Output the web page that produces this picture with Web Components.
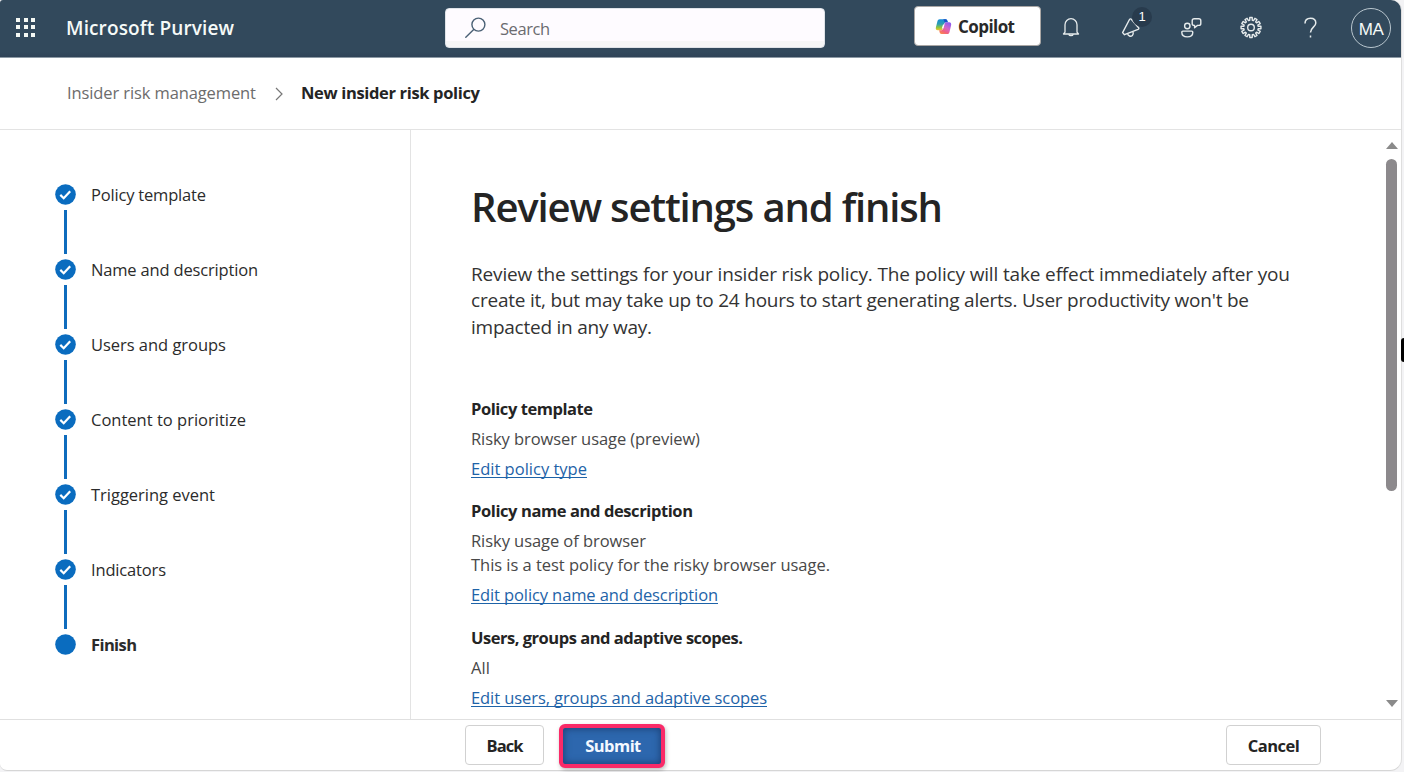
<!DOCTYPE html>
<html lang="en">
<head>
<meta charset="utf-8">
<title>Microsoft Purview</title>
<style>
body{margin:0;width:1404px;height:772px;overflow:hidden;background:#f3f3f5;font-family:"Open Sans","Noto Sans",sans-serif;color:#242424}
</style>
</head>
<body>
<pv-shell></pv-shell>
<script>
const define=(name,html,setup)=>customElements.define(name,class extends HTMLElement{
  connectedCallback(){
    if(this.shadowRoot)return;
    const t=document.createElement('template');
    t.innerHTML=html;
    this.attachShadow({mode:'open'}).append(t.content.cloneNode(true));
    if(setup)setup(this,this.shadowRoot);
  }
});

/* One line of text, tracked so that it fills the measure given in "w". */
define('pv-text',`<style>:host{display:block;white-space:nowrap}span{display:inline-block}</style><span><slot></slot></span>`,(el,root)=>{
  const w=parseFloat(el.getAttribute('w')),n=el.textContent.length;
  const s=root.querySelector('span');
  if(w&&n>1){s.style.letterSpacing=((w-s.getBoundingClientRect().width)/(n-1))+'px'}
});

define('pv-search',`<style>
:host{display:flex;align-items:center;box-sizing:border-box;width:380px;height:40px;border-radius:4px;background:linear-gradient(#fefbff 0 32px,#f6f6f7 32px);border:1px solid #dfe3e8;padding-left:19px;color:#6b6b70;font-size:16.500px}
svg{width:22px;height:22px;margin-right:13px}
pv-text{padding-top:1px}
</style><svg viewBox="0 0 22 22" fill="none" stroke="#4a6075" stroke-width="1.4" stroke-linecap="round"><circle cx="13.4" cy="7.6" r="6.5"/><path d="M8.7 12.4.8 20.2"/></svg><pv-text w="50">Search</pv-text>`);

define('pv-copilot',`<style>
:host{display:flex;align-items:center;box-sizing:border-box;width:127px;height:40px;border-radius:4px;background:#fff;border:1px solid #a9a6a4;padding-left:20px;color:#292929;font-size:17px;font-weight:700}
svg{width:17px;height:17px;margin-right:6px}
</style><svg viewBox="0 0 18 18"><defs>
<linearGradient id="a" x1="0" y1="0" x2="0" y2="1"><stop offset="0" stop-color="#168bd8"/><stop offset=".45" stop-color="#2e9fb0"/><stop offset=".75" stop-color="#8fc63f"/><stop offset="1" stop-color="#f5c32c"/></linearGradient>
<linearGradient id="b" x1=".8" y1="0" x2=".2" y2="1"><stop offset="0" stop-color="#8a5cf0"/><stop offset=".45" stop-color="#d565c8"/><stop offset=".75" stop-color="#f2617c"/><stop offset="1" stop-color="#fa8a4b"/></linearGradient></defs>
<path d="M5 1.200h6.200c1.200 0 1.600.7 2 1.800l.5 1.600h-2c-1.200 0-1.800.8-2.100 1.900L8.300 11c-.4 1.400-1 2-2.200 2H3C1.100 13 .5 11.500 1 9.700l1.500-6C2.900 2 3.700 1.200 5 1.200z" fill="url(#a)"/>
<path d="M11 1.200c1.200 0 1.600.7 2 1.800l.5 1.600h-3.400l-.8-2.400c-.2-.6-.5-1-1-1z" fill="#1b50c8"/>
<path d="M13 17H6.900c-1.200 0-1.700-.7-2-1.800L4.400 13h2c1.200 0 1.900-.8 2.200-1.900l1.300-4.500c.4-1.400 1-2 2.200-2H15c1.900 0 2.500 1.500 2 3.300l-1.500 6.300C15.100 16 14.300 17 13 17z" fill="url(#b)"/>
<path d="m8.500 6.800h1.600l-1.300 4.400H7.200z" fill="#fff"/></svg><pv-text w="57">Copilot</pv-text>`);

define('pv-action',`<style>
:host{display:flex;align-items:center;justify-content:center;position:relative;width:60px;height:56px;color:#e6ebec}
::slotted(svg){width:22px;height:22px;overflow:visible}
b{position:absolute;left:31px;top:7px;width:20px;height:20px;border-radius:50%;background:#283b4d;font:13px/20px "Liberation Sans",sans-serif;text-align:center;color:#fff}
b[hidden]{display:none}
</style><slot></slot><b hidden></b>`,(el,root)=>{
  const n=el.getAttribute('badge');
  if(n){const b=root.querySelector('b');b.hidden=false;b.textContent=n}
});

define('pv-header',`<style>
:host{display:flex;flex:none;align-items:center;box-sizing:border-box;height:58px;padding:0 10px 3px 16px;background:linear-gradient(#32495c 0 52px,#2f4357 57px,#8c9aa5 57px);border-radius:3px 10px 0 0;color:#f6faf8}
.dots{display:grid;grid-template-columns:repeat(3,4px);gap:3.500px;width:50px;margin-top:-1px}
.dots i{width:4px;height:4px;background:#f4f8f4}
.title{font-size:19px;font-weight:600;width:379px}
.gap{flex:1}
.me{box-sizing:border-box;width:40px;height:40px;border:1.500px solid #bac7cf;border-radius:50%;display:flex;align-items:center;justify-content:center;font:17px "Liberation Sans",sans-serif;margin-left:10px}
.me pv-text{padding-top:4px}
pv-copilot{margin-top:-3px}
</style>
<div class="dots"><i></i><i></i><i></i><i></i><i></i><i></i><i></i><i></i><i></i></div>
<pv-text class="title" w="168">Microsoft Purview</pv-text>
<pv-search></pv-search><span class="gap"></span><pv-copilot></pv-copilot>
<pv-action><svg viewBox="0 0 22 22" fill="none" stroke="currentColor" stroke-width="1.300" stroke-linejoin="round"><path d="M5 15.200V7.700a6 6 0 0 1 12 0v7.500l1.500 1.800h-15z"/><path d="M8.700 17.200a2.400 2 0 0 0 4.600 0"/></svg></pv-action>
<pv-action badge="1"><svg viewBox="0 0 22 22" fill="none" stroke="currentColor" stroke-width="1.400" stroke-linejoin="round"><path d="M9.500 2.500C10 1.700 11 1.600 11.500 2.500L18.600 10.700c.5.7.2 1.300-.5 1.600L4.500 17.700 2.600 15.600z"/><path d="M7.700 16.800c.2 2.300 3 3.100 4.700 1.600.9-.8 1.100-1.900.6-3.500"/></svg></pv-action>
<pv-action><svg viewBox="0 0 22 22" fill="none" stroke="currentColor" stroke-width="1.400" stroke-linejoin="round"><circle cx="7.300" cy="9" r="2.700"/><path d="M2.900 14.100h8.800a1.100 1.100 0 0 1 1.100 1.100c0 3-2.400 4.700-5.500 4.700s-5.500-1.700-5.500-4.700a1.100 1.100 0 0 1 1.100-1.100z"/><path d="M14.200 1.800h4.600a2 2 0 0 1 2 2v2.600a2 2 0 0 1-2 2h-1.300l-2.900 2.300V8.400h-.4a2 2 0 0 1-2-2V3.800a2 2 0 0 1 2-2z"/></svg></pv-action>
<pv-action><svg id="gear" viewBox="0 0 22 22" fill="none" stroke="currentColor" stroke-width="1.400" stroke-linejoin="round"><circle cx="11" cy="10.500" r="3.300"/><path/></svg></pv-action>
<pv-action><svg viewBox="0 0 22 22" fill="none" stroke="currentColor" stroke-width="1.500"><path d="M5 6.500C5 3 7.200 1.200 10.500 1.200s5.300 2 5.300 4.800c0 4-5.300 4.500-5.300 9.500"/><path d="M10.500 18.500v2"/></svg></pv-action>
<div class="me"><pv-text w="25">MA</pv-text></div>`,(el,root)=>{
  /* Twelve-toothed gear outline. */
  const pts=[];
  for(let i=0;i<12;i++)for(const [o,r] of [[-10,7.300],[-7,10],[7,10],[10,7.300]]){
    const a=(i*30+o)*Math.PI/180;
    pts.push((11+r*Math.sin(a)).toFixed(2)+' '+(10.500-r*Math.cos(a)).toFixed(2));
  }
  root.querySelector('#gear path').setAttribute('d','M'+pts.join('L')+'z');
});

define('pv-breadcrumb',`<style>
:host{display:flex;flex:none;align-items:center;box-sizing:border-box;height:72px;padding:0 0 2px 67px;border-bottom:1px solid #e3e3e3;font-size:16.500px}
.parent{color:#6c6c6c;width:208px}
svg{width:8px;height:14px;margin:2px 18px 0 0}
.now{font-weight:700;color:#242424}
</style><pv-text class="parent" w="189">Insider risk management</pv-text><svg viewBox="0 0 8 14" fill="none" stroke="#777" stroke-width="1.200"><path d="m1 1 6 6-6 6"/></svg><pv-text class="now" w="179">New insider risk policy</pv-text>`);

define('pv-step',`<style>
:host{display:grid;grid-template-columns:21px 1fr;column-gap:15px;height:75px;font-size:16.500px;color:#2b2b2b}
.rail{display:flex;flex-direction:column;align-items:center}
svg{width:21px;height:21px}
.line{width:3px;height:44px;margin-top:5px;background:#0f6cbd}
.label{height:21px;line-height:21px;margin-top:-.5px}
:host([current]) .label{font-weight:700}
:host([current]) .line,:host([current]) .tick{display:none}
</style><div class="rail"><svg viewBox="0 0 21 21"><circle cx="10.500" cy="10.500" r="10.300" fill="#0a6cbf"/><path class="tick" d="m5.300 10.900 3.400 3.300 6.500-7" fill="none" stroke="#fff" stroke-width="2.200"/></svg><div class="line"></div></div><div class="label"><slot></slot></div>`);

define('pv-steps',`<style>:host{display:block;box-sizing:border-box;width:411px;padding:54px 0 0 55px;border-right:1px solid #e3e3e3}</style>
<pv-step><pv-text w="115">Policy template</pv-text></pv-step>
<pv-step><pv-text w="167">Name and description</pv-text></pv-step>
<pv-step><pv-text w="135">Users and groups</pv-text></pv-step>
<pv-step><pv-text w="155">Content to prioritize</pv-text></pv-step>
<pv-step><pv-text w="124">Triggering event</pv-text></pv-step>
<pv-step><pv-text w="75">Indicators</pv-text></pv-step>
<pv-step current><pv-text w="46">Finish</pv-text></pv-step>`);

define('pv-section',`<style>
:host{display:grid;row-gap:6px;margin-bottom:18.400px;font-size:16.500px;line-height:24px;color:#484848}
.h{font-weight:700;color:#242424}
</style><div class="h"><slot name="heading"></slot></div><div><slot></slot></div><div><slot name="link"></slot></div>`);

define('pv-review',`<style>
:host{display:block;box-sizing:border-box;flex:1;padding:51px 0 0 60px;overflow:hidden}
h1{margin:0;font-size:40px;font-weight:600;line-height:52px;height:52px}
.intro{margin:28px 0 57px;font-size:19px;line-height:26.250px;color:#333}
</style>
<h1><pv-text w="472">Review settings and finish</pv-text></h1>
<div class="intro">
<pv-text w="819">Review the settings for your insider risk policy. The policy will take effect immediately after you</pv-text>
<pv-text w="778">create it, but may take up to 24 hours to start generating alerts. User productivity won't be</pv-text>
<pv-text w="181">impacted in any way.</pv-text>
</div>
<pv-section><pv-text slot="heading" w="122">Policy template</pv-text><pv-text w="229">Risky browser usage (preview)</pv-text><pv-link slot="link" w="116">Edit policy type</pv-link></pv-section>
<pv-section><pv-text slot="heading" w="222">Policy name and description</pv-text><pv-text w="175">Risky usage of browser</pv-text><pv-text w="359">This is a test policy for the risky browser usage.</pv-text><pv-link slot="link" w="247">Edit policy name and description</pv-link></pv-section>
<pv-section><pv-text slot="heading" w="272">Users, groups and adaptive scopes.</pv-text><pv-text w="19">All</pv-text><pv-link slot="link" w="296">Edit users, groups and adaptive scopes</pv-link></pv-section>`);

define('pv-link',`<style>:host{display:block;white-space:nowrap;color:#1e63a8}a{display:inline-block;text-decoration:underline;text-decoration-thickness:1px;text-underline-offset:2px;text-decoration-skip-ink:none}</style><a><slot></slot></a>`,(el,root)=>{
  const a=root.querySelector('a');
  a.style.letterSpacing=((parseFloat(el.getAttribute('w'))-a.getBoundingClientRect().width)/el.textContent.length)+'px';
});

define('pv-scrollbar',`<style>
:host{display:flex;flex-direction:column;align-items:center;box-sizing:border-box;width:11px;margin-right:4px;padding:12px 0}
svg{width:12px;height:7px;flex:none}
.thumb{width:11px;height:332px;border-radius:6px;background:#8c898c;margin-top:10px}
.space{flex:1}
</style><svg viewBox="0 0 12 7"><path d="M6 0l6 7H0z" fill="#8a8a8a"/></svg><div class="thumb"></div><div class="space"></div><svg viewBox="0 0 12 7"><path d="M0 0h12L6 7z" fill="#8a8a8a"/></svg>`);

define('pv-button',`<style>
:host{display:flex;align-items:center;justify-content:center;box-sizing:border-box;width:79px;height:40px;border:1px solid #d1d1d1;border-radius:4px;background:#fff;color:#242424;font-size:16.500px;font-weight:700}
:host([primary]){width:106px;height:44px;border:4px solid #fa2a68;border-radius:6px;background:#2d67ae;color:#f4f8ff;box-shadow:inset 0 0 7px 1px #1d4379,1px 2px 4px #0004}
:host([wide]){width:95px}
</style><slot></slot>`);

define('pv-footer',`<style>
:host{display:flex;flex:none;align-items:center;box-sizing:border-box;height:51px;padding:0 80px 0 465px;border-top:1px solid #e0e0e0}
pv-button[primary]{margin-left:15px;padding-left:2px;padding-bottom:1px;margin-top:1px}
span{flex:1}
</style><pv-button><pv-text w="37">Back</pv-text></pv-button><pv-button primary><pv-text w="56">Submit</pv-text></pv-button><span></span><pv-button wide><pv-text w="52">Cancel</pv-text></pv-button>`);

define('pv-shell',`<style>
:host{display:block;position:relative;height:772px}
.window{display:flex;flex-direction:column;box-sizing:border-box;width:1402px;height:771px;background:#fff;border-radius:4px 10px 12px 7px;border-right:1px solid #dedede;border-bottom:1px solid #d6d6d6}
.main{display:flex;flex:none;height:589px;overflow:hidden}
.handle{position:absolute;right:0;top:338px;width:3px;height:24px;background:#000;border-radius:3px 0 0 3px}
</style><div class="window"><pv-header></pv-header><pv-breadcrumb></pv-breadcrumb><div class="main"><pv-steps></pv-steps><pv-review></pv-review><pv-scrollbar></pv-scrollbar></div><pv-footer></pv-footer></div><div class="handle"></div>`);
</script>
</body>
</html>
